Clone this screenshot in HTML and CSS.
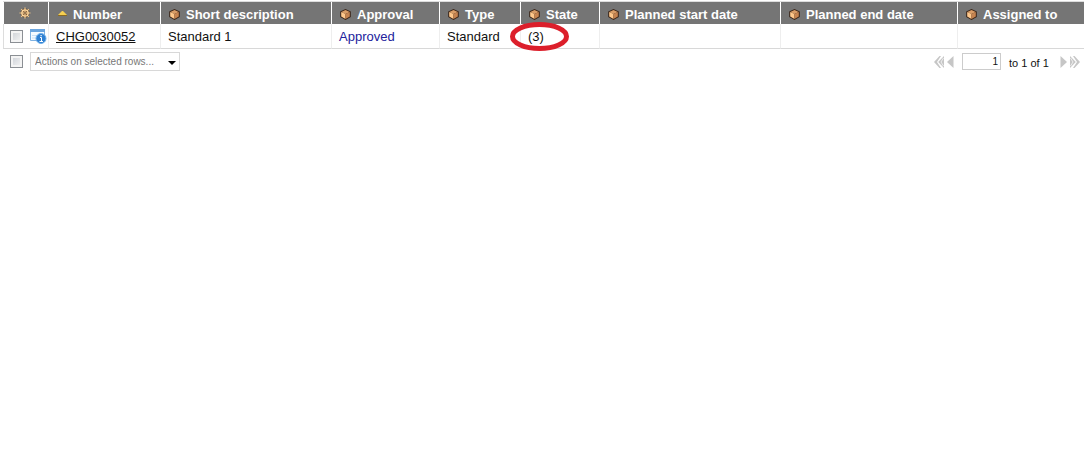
FILE: index.html
```html
<!DOCTYPE html>
<html lang="en">
<head>
<meta charset="utf-8">
<title>Change requests</title>
<link rel="stylesheet" href="styles.css">
</head>
<body>
<svg class="defs" aria-hidden="true">
  <symbol id="cube" viewBox="0 0 11 11">
    <path d="M5.500 0 10.800 2.500v5.500L5.500 11 .2 8V2.500z" fill="#3a2416"/>
    <path d="M5.500 1 9.800 3 5.500 5 1.200 3z" fill="#d99c66"/>
    <path d="M1.200 3 5.500 5v5L1.200 7.600z" fill="#ffc88c"/>
    <path d="M5.500 5 9.800 3v4.600L5.500 10z" fill="#c58350"/>
  </symbol>
  <symbol id="prev" viewBox="0 0 7 12"><path d="M6.500 0v12L0 6z"/></symbol>
  <symbol id="first" viewBox="0 0 11 12"><path d="M5.500 0H7L3 6l4 6H5.500L0 6zM10 0v12L4.200 6z"/><path d="M9.500 2 7 6l2.500 4" fill="none" stroke="#eee"/></symbol>
</svg>
<main class="list">
  <table class="grid">
    <colgroup>
      <col class="c-tools"><col class="c-number"><col class="c-desc"><col class="c-approval"><col class="c-type"><col class="c-state"><col class="c-start"><col class="c-end"><col>
    </colgroup>
    <thead>
      <tr>
        <th class="tools"><button class="gear" aria-label="Personalize list"><svg width="12" height="12" viewBox="0 0 12 12"><circle cx="6" cy="6" r="4.500" fill="#4a3424"/><path d="M6 .5v11M.5 6h11M2.200 2.200l7.600 7.600M9.800 2.200 2.200 9.800" stroke="#f0c88c" stroke-width="1.200"/><circle cx="6" cy="6" r="3.200" fill="#8a6038" stroke="#ffd9a0" stroke-width="1.300"/><path d="M6 3v6M3 6h6" stroke="#ffd9a0"/><circle cx="6" cy="6" r=".8" fill="#3a2818"/></svg></button></th>
        <th><span class="head sorted"><svg class="sort" width="11" height="11" viewBox="0 0 11 11"><path d="M1 6 5 2h1l4 4z" fill="#f5cf51"/><path d="M1 6.500h9" stroke="#8a6a20"/></svg>Number</span></th>
        <th><span class="head"><svg class="cube"><use href="#cube"/></svg>Short description</span></th>
        <th><span class="head"><svg class="cube"><use href="#cube"/></svg>Approval</span></th>
        <th><span class="head"><svg class="cube"><use href="#cube"/></svg>Type</span></th>
        <th><span class="head"><svg class="cube"><use href="#cube"/></svg>State</span></th>
        <th><span class="head"><svg class="cube"><use href="#cube"/></svg>Planned start date</span></th>
        <th><span class="head"><svg class="cube"><use href="#cube"/></svg>Planned end date</span></th>
        <th><span class="head"><svg class="cube"><use href="#cube"/></svg>Assigned to</span></th>
      </tr>
    </thead>
    <tbody>
      <tr>
        <td class="tools"><span class="picks"><input class="check" type="checkbox" aria-label="Select CHG0030052"><svg width="17" height="15" viewBox="0 0 17 15"><path d="M.5 1.500h14v10H.5z" fill="#f4faff" stroke="#7fb2e2"/><path d="M0 0h15v3H0z" fill="#6ba5de"/><path d="M2 6.500h5M2 9h4" stroke="#c9e0f4"/><circle cx="11" cy="9.500" r="5" fill="#2f80d2" stroke="#6fb0ea"/><path d="M10 8.500h1.500v4M9.500 12.500h3.500" fill="none" stroke="#fff"/><path d="M10.500 6h1.200v1.200h-1.200z" fill="#fff"/></svg></span></td>
        <td><a class="record" href="#">CHG0030052</a></td>
        <td>Standard 1</td>
        <td><span class="approved">Approved</span></td>
        <td>Standard</td>
        <td class="state">(3)<svg class="ring" viewBox="0 0 59 29" aria-hidden="true"><ellipse cx="29.500" cy="14.500" rx="27" ry="12" fill="none" stroke="#dc1f2b" stroke-width="5"/></svg></td>
        <td></td>
        <td></td>
        <td></td>
      </tr>
    </tbody>
  </table>
  <footer class="bar">
    <input class="check" type="checkbox" aria-label="Select all rows">
    <span class="picker">
      <select class="actions" aria-label="Actions"><option>Actions on selected rows...</option></select>
      <svg class="arrow" width="8" height="4" viewBox="0 0 8 4" aria-hidden="true"><path d="M0 0h8L4 4z"/></svg>
    </span>
    <nav class="pager" aria-label="Pages">
      <button class="step" aria-label="First page"><svg width="11" height="12"><use href="#first"/></svg></button>
      <button class="step" aria-label="Previous page"><svg width="7" height="12"><use href="#prev"/></svg></button>
      <input class="page" type="text" value="1" aria-label="Row">
      <span class="range">to 1 of 1</span>
      <button class="step flip" aria-label="Next page"><svg width="7" height="12"><use href="#prev"/></svg></button>
      <button class="step flip" aria-label="Last page"><svg width="11" height="12"><use href="#first"/></svg></button>
    </nav>
  </footer>
</main>
</body>
</html>
```
FILE: styles.css
```css
* { box-sizing: border-box; }
body {
  margin: 0;
  background: #fff;
  color: #111;
  font: 13px/16px "Liberation Sans", Arial, sans-serif;
}
svg { display: block; flex: none; }
button { border: 0; padding: 0; background: none; }
.defs { position: absolute; width: 0; height: 0; }
.list { padding: 1px 0 0 3px; }

.grid {
  width: 100%;
  table-layout: fixed;
  border-collapse: separate;
  border-spacing: 0;
  border-top: 1px solid #ddd;
}
.c-tools { width: 45px; }
.c-number { width: 112px; }
.c-desc { width: 171px; }
.c-approval { width: 108px; }
.c-type { width: 81px; }
.c-state { width: 79px; }
.c-start { width: 181px; }
.c-end { width: 177px; }

th {
  height: 22px;
  padding: 3px 0 0 8px;
  border-left: 1px solid #fff;
  background: #757575;
  color: #fff;
  text-align: left;
  white-space: nowrap;
}
td {
  height: 25px;
  padding: 1px 0 0 7px;
  border-left: 1px solid #eee;
  border-bottom: 1px solid #d8d8d8;
}
th.tools { padding: 0 0 0 15px; }
td.tools { padding: 0 0 0 6px; border-left-color: #ddd; }
.head { display: flex; align-items: center; gap: 6px; }
.sorted { gap: 5px; }
.cube { width: 11px; height: 11px; margin-bottom: 1px; }
.gear { display: block; }
.picks { display: flex; align-items: center; gap: 7px; }
.record { color: #111; text-decoration: underline; }
.approved { color: #22229c; }
.state { position: relative; }
.ring { position: absolute; left: -11px; top: -2px; width: 59px; height: 29px; }

.check {
  appearance: none;
  flex: none;
  width: 13px;
  height: 13px;
  margin: 0;
  border: 1px solid #8b8f94;
  background: linear-gradient(135deg, #cbcfd5, #f6f6f6);
  box-shadow: inset 0 0 0 2px #f4f4f4;
}
.bar { display: flex; align-items: center; padding: 3px 4px 0 7px; }
.picker { position: relative; margin-left: 7px; }
.actions {
  appearance: none;
  display: block;
  width: 150px;
  height: 19px;
  padding: 0 4px;
  border: 1px solid #d8d8d8;
  border-radius: 0;
  background: #fff;
  color: #777;
  font: 10px/16px "Liberation Sans", Arial, sans-serif;
}
.arrow { position: absolute; right: 4px; top: 9px; }
.pager { display: flex; align-items: center; gap: 2px; margin-left: auto; }
.step { fill: #c6c6c6; }
.flip svg { transform: scaleX(-1); }
.page {
  width: 39px;
  height: 17px;
  margin: 0 6px;
  padding: 0 2px;
  border: 1px solid #ccc;
  color: #111;
  text-align: right;
  font: 10px/14px "Liberation Sans", Arial, sans-serif;
}
.range { width: 43px; margin-right: 6px; padding-top: 3px; font-size: 11px; white-space: nowrap; }
```
